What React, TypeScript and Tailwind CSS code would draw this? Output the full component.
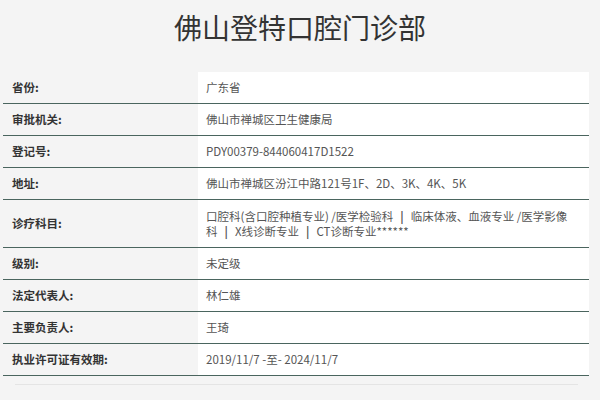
const rows: { label: string; value: React.ReactNode; tall?: boolean }[] = [
  { label: "省份:", value: "广东省" },
  { label: "审批机关:", value: "佛山市禅城区卫生健康局" },
  { label: "登记号:", value: "PDY00379-844060417D1522" },
  { label: "地址:", value: "佛山市禅城区汾江中路121号1F、2D、3K、4K、5K" },
  {
    label: "诊疗科目:",
    tall: true,
    value: (
      <>
        口腔科(含口腔种植专业) /医学检验科<span className="mx-[7px] font-bold">|</span>临床体液、血液专业 /医学影像
        <br />
        科<span className="mx-[7px] font-bold">|</span>X线诊断专业<span className="mx-[7px] font-bold">|</span>CT诊断专业******
      </>
    ),
  },
  { label: "级别:", value: "未定级" },
  { label: "法定代表人:", value: "林仁雄" },
  { label: "主要负责人:", value: "王琦" },
  { label: "执业许可证有效期:", value: "2019/11/7 -至- 2024/11/7" },
];

export default function App() {
  return (
    <div
      className="w-[600px] h-[400px] overflow-hidden bg-[#f4f4f4]"
      style={{ fontFamily: '"Noto Sans CJK SC", "Noto Sans", sans-serif' }}
    >
      {/* Title */}
      <h1 className="h-[72px] pt-[7px] text-center text-[28px] leading-[40px] text-[#333]">
        佛山登特口腔门诊部
      </h1>

      {/* Info table */}
      <div className="ml-[3px] w-[586px]">
        {rows.map((r) => (
          <div
            key={r.label}
            className={`grid grid-cols-[195px_1fr] border-b border-[#4a655e] ${
              r.tall ? "h-[48px]" : "h-[32px]"
            }`}
          >
            <div className="flex items-center pl-[9px] text-[11.5px] font-semibold text-[#333]">
              {r.label}
            </div>
            <div className="flex items-center bg-white pl-[8px] text-[11.5px] leading-[15px] text-[#555]">
              <div>{r.value}</div>
            </div>
          </div>
        ))}
      </div>

      <div className="mx-[15px] mt-[8px] w-[563px] border-t border-[#e4e4e4]" />
    </div>
  );
}
